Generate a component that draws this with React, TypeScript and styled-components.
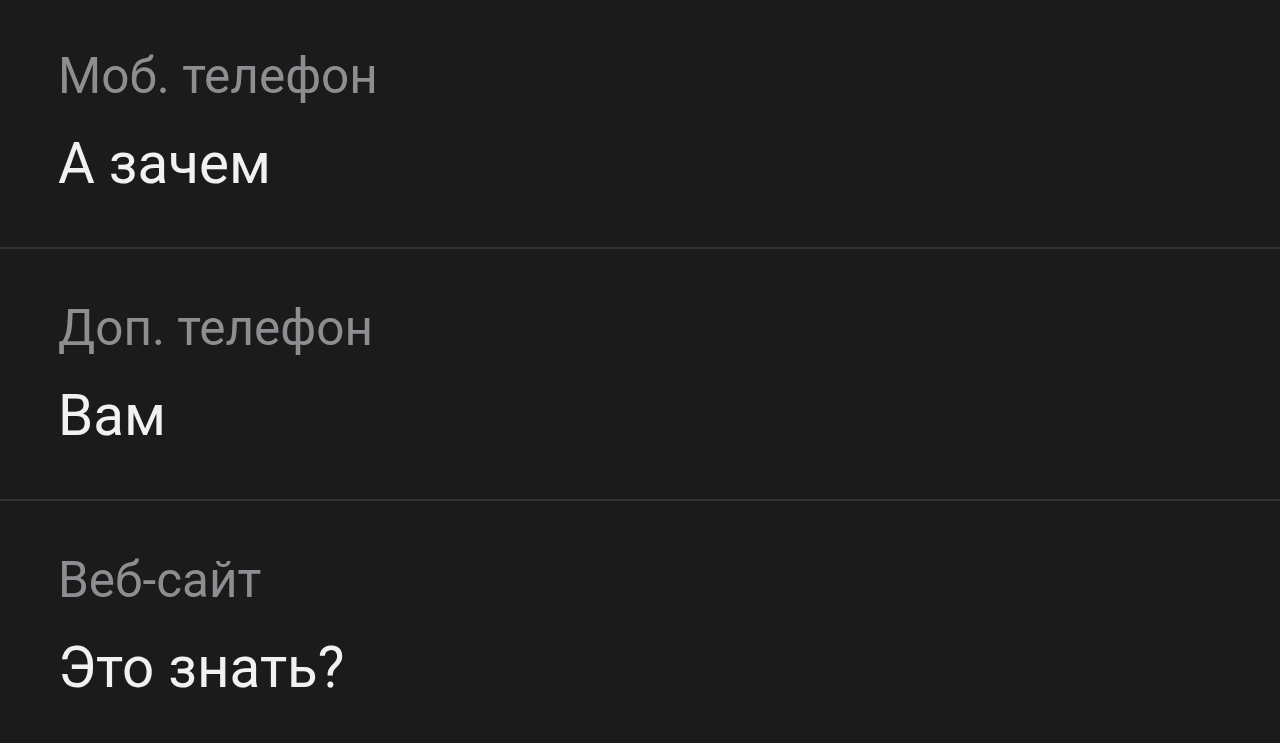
import React from "react";
import styled, { createGlobalStyle } from "styled-components";

const Global = createGlobalStyle`
  html, body { margin: 0; padding: 0; background: #1b1b1b; }
  body { font-family: Roboto, "Noto Sans", sans-serif; -webkit-font-smoothing: antialiased; }
`;

const List = styled.div`
  display: flex;
  flex-direction: column;
  width: 1280px;
  height: 743px;
  overflow: hidden;
  background: #1b1b1b;
`;

const Row = styled.div`
  display: flex;
  flex-direction: column;
  padding: 49px 0 0 58px;
  height: 252px;
  box-sizing: border-box;
  border-bottom: 2px solid #323232;
  flex-shrink: 0;
  &:first-child {
    height: 249px;
    padding-top: 46px;
  }
  &:last-child { border-bottom: none; }
`;

const Label = styled.div`
  font-size: 49.5px;
  line-height: 60px;
  color: #8d8e91;
`;

const Value = styled.div`
  margin-top: 23px;
  font-size: 56.5px;
  line-height: 70px;
  color: #f1f1f1;
`;

const items = [
  { label: "Моб. телефон", value: "А зачем" },
  { label: "Доп. телефон", value: "Вам" },
  { label: "Веб-сайт", value: "Это знать?" },
];

export default function App() {
  return (
    <>
      <Global />
      <List>
        {items.map((it) => (
          <Row key={it.label}>
            <Label>{it.label}</Label>
            <Value>{it.value}</Value>
          </Row>
        ))}
      </List>
    </>
  );
}
